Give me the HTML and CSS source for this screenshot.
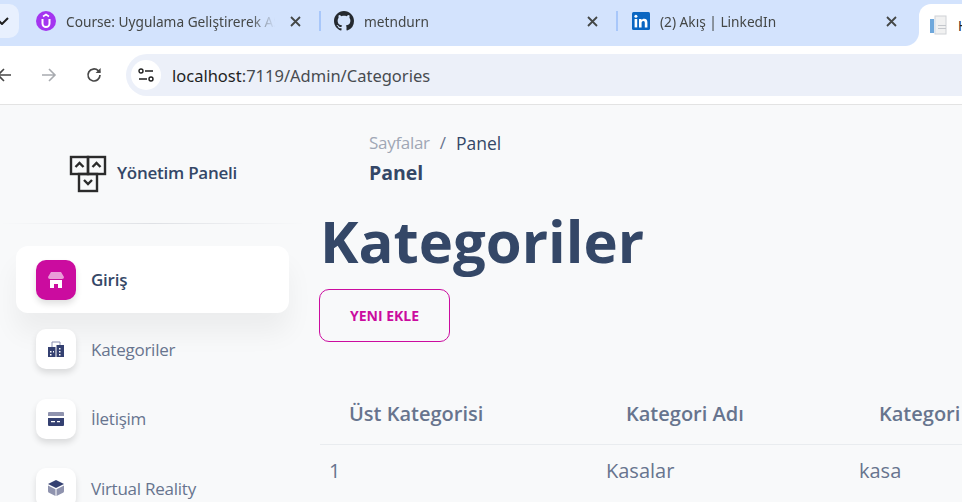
FILE: index.html
```html
<!DOCTYPE html>
<html lang="tr">
<head>
    <meta charset="UTF-8">
    <meta name="viewport" content="width=device-width, initial-scale=1.0">
    <title>Kategoriler</title>
    <link rel="stylesheet" href="styles.css">
</head>
<body>
    <header class="browser">
        <div class="tab-strip">
            <div class="tab-stub">
                <svg width="10" height="8" viewBox="0 0 10 8"><path d="M-1 4l3 3 6-6" fill="none" stroke="#1f1f1f" stroke-width="2"/></svg>
            </div>
            <div class="tab tab-course">
                <svg class="favicon" width="20" height="20" viewBox="0 0 20 20">
                    <circle cx="10" cy="10" r="10" fill="#a435f0"/>
                    <path d="M6.500 8v4.500a3.500 3.500 0 0 0 7 0V8" fill="none" stroke="#fff" stroke-width="2"/>
                    <path d="M7 5.500L10 3.500l3 2" fill="none" stroke="#fff" stroke-width="1.600"/>
                </svg>
                <span class="tab-title">Course: Uygulama Geliştirerek ASP.NET</span>
                <svg class="tab-close" width="11" height="11" viewBox="0 0 11 11"><path d="M1 1l9 9M10 1l-9 9" stroke="#444746" stroke-width="1.800"/></svg>
            </div>
            <div class="tab tab-github">
                <svg class="favicon" width="20" height="20" viewBox="0 0 16 16">
                    <path fill="#24292f" d="M8 0C3.58 0 0 3.58 0 8c0 3.54 2.29 6.53 5.47 7.59.4.07.55-.17.55-.38 0-.19-.01-.82-.01-1.49-2.01.37-2.53-.49-2.69-.94-.09-.23-.48-.94-.82-1.13-.28-.15-.68-.52-.01-.53.63-.01 1.08.58 1.23.82.72 1.21 1.87.87 2.33.66.07-.52.28-.87.51-1.07-1.78-.2-3.64-.89-3.64-3.95 0-.87.31-1.59.82-2.15-.08-.2-.36-1.02.08-2.12 0 0 .67-.21 2.2.82.64-.18 1.32-.27 2-.27s1.36.09 2 .27c1.53-1.04 2.2-.82 2.2-.82.44 1.1.16 1.92.08 2.12.51.56.82 1.27.82 2.15 0 3.07-1.87 3.75-3.65 3.95.29.25.54.73.54 1.48 0 1.07-.01 1.93-.01 2.2 0 .21.15.46.55.38A8.01 8.01 0 0 0 16 8c0-4.42-3.58-8-8-8z"/>
                </svg>
                <span class="tab-title">metndurn</span>
                <svg class="tab-close" width="11" height="11" viewBox="0 0 11 11"><path d="M1 1l9 9M10 1l-9 9" stroke="#444746" stroke-width="1.800"/></svg>
            </div>
            <div class="tab tab-linkedin">
                <svg class="favicon" width="18" height="18" viewBox="0 0 18 18">
                    <rect width="18" height="18" rx="1.500" fill="#0a66c2"/>
                    <rect x="2.600" y="7" width="2.600" height="8.400" fill="#fff"/>
                    <circle cx="3.900" cy="4.200" r="1.500" fill="#fff"/>
                    <path d="M7 7h2.500v1.200c.5-.8 1.400-1.400 2.700-1.400 2.400 0 3.200 1.500 3.200 3.800v4.800h-2.600v-4.300c0-1.100-.3-2-1.400-2s-1.800.8-1.800 2v4.300H7z" fill="#fff"/>
                </svg>
                <span class="tab-title">(2) Akış | LinkedIn</span>
                <svg class="tab-close" width="11" height="11" viewBox="0 0 11 11"><path d="M1 1l9 9M10 1l-9 9" stroke="#444746" stroke-width="1.800"/></svg>
            </div>
            <div class="tab-active">
                <svg class="favicon" width="18" height="20" viewBox="0 0 18 20">
                    <rect x="5" y="1" width="11" height="18" fill="#f1f1f1" stroke="#cfd2d6"/>
                    <rect x="0" y="4" width="4" height="14" fill="#6fa8dc"/>
                    <rect x="4" y="4" width="2" height="14" fill="#dfe6ee"/>
                    <rect x="8" y="10" width="8" height="1" fill="#c4c7cc"/>
                    <rect x="8" y="13" width="8" height="1" fill="#c4c7cc"/>
                </svg>
                <span class="tab-title-active">Home</span>
            </div>
        </div>
        <div class="toolbar">
            <svg class="nav-back" width="16" height="16" viewBox="0 0 16 16"><path d="M15 8H2M8 2L2 8l6 6" fill="none" stroke="#474747" stroke-width="1.600"/></svg>
            <svg class="nav-forward" width="16" height="16" viewBox="0 0 16 16"><path d="M1 8h13M8 2l6 6-6 6" fill="none" stroke="#a8abb0" stroke-width="1.600"/></svg>
            <svg class="nav-reload" width="18" height="18" viewBox="0 0 18 18"><path d="M15 9a6 6 0 1 1-1.800-4.300L15 6.500" fill="none" stroke="#474747" stroke-width="1.700"/><path d="M15.600 2v5h-5z" fill="#474747"/></svg>
            <div class="omnibox">
                <span class="site-info">
                    <svg width="16" height="14" viewBox="0 0 16 14">
                        <circle cx="3" cy="3" r="2" fill="none" stroke="#1f1f1f" stroke-width="1.400"/>
                        <path d="M7 3h8M1 11h8" stroke="#1f1f1f" stroke-width="1.400"/>
                        <circle cx="13" cy="11" r="2" fill="none" stroke="#1f1f1f" stroke-width="1.400"/>
                    </svg>
                </span>
                <span class="url"><span class="url-host">localhost</span>:7119/Admin/Categories</span>
            </div>
        </div>
    </header>

    <div class="layout">
        <aside class="sidebar">
            <div class="brand">
                <svg width="38" height="38" viewBox="0 0 38 38">
                    <g fill="none" stroke="#2b2b2b" stroke-width="2.400">
                        <rect x="2" y="2" width="17" height="17"/>
                        <rect x="19" y="2" width="17" height="17"/>
                        <rect x="10" y="19" width="18" height="17"/>
                        <path d="M6.500 12l4-4 4 4M23.500 12l4-4 4 4M15 25l4 4 4-4"/>
                    </g>
                </svg>
                <span class="brand-name">Yönetim Paneli</span>
            </div>
            <hr class="sidebar-line">
            <nav class="menu">
                <a class="menu-item active">
                    <span class="menu-icon">
                        <svg width="16" height="16" viewBox="0 0 16 16">
                            <path d="M3 0h10l3 5a2 2 0 0 1-2 2H2a2 2 0 0 1-2-2z" fill="#fff" opacity=".6"/>
                            <path d="M2 8h12v8H10v-4H6v4H2z" fill="#fff"/>
                        </svg>
                    </span>
                    Giriş
                </a>
                <a class="menu-item">
                    <span class="menu-icon">
                        <svg width="16" height="16" viewBox="0 0 16 16">
                            <path d="M4 6V1h8v5" fill="none" stroke="#8a8fb0" stroke-width="1"/>
                            <path d="M0 6h7.500v10H0zM8.500 4H16v12H8.500z" fill="#344071"/>
                            <path d="M2 10h1.500v1.500H2zM2 13h1.500v1.500H2zM5 10h1v1.500H5zM11 7h1.500v1.500H11zM11 10h1.500v1.500H11zM11 13h1.500v1.500H11z" fill="#fff"/>
                        </svg>
                    </span>
                    Kategoriler
                </a>
                <a class="menu-item">
                    <span class="menu-icon">
                        <svg width="16" height="14" viewBox="0 0 16 14">
                            <path d="M1 0h14a1 1 0 0 1 1 1v3H0V1a1 1 0 0 1 1-1z" fill="#8f93ae"/>
                            <path d="M0 6h16v7a1 1 0 0 1-1 1H1a1 1 0 0 1-1-1z" fill="#344071"/>
                            <path d="M3 9h4v1.300H3zM9 9h3v1.300H9z" fill="#fff"/>
                        </svg>
                    </span>
                    İletişim
                </a>
                <a class="menu-item">
                    <span class="menu-icon">
                        <svg width="16" height="16" viewBox="0 0 16 16">
                            <path d="M8 0l8 4-8 4-8-4z" fill="#344071"/>
                            <path d="M0 5.500l7.500 3.700V16L1 12.800a2 2 0 0 1-1-1.600zM16 5.500L8.500 9.200V16l6.500-3.200a2 2 0 0 0 1-1.600z" fill="#8f93ae"/>
                        </svg>
                    </span>
                    Virtual Reality
                </a>
            </nav>
        </aside>

        <main class="content">
            <div class="page-head">
                <div class="breadcrumb"><span class="crumb-muted">Sayfalar</span><span class="crumb-sep">/</span><span class="crumb-current">Panel</span></div>
                <div class="page-name">Panel</div>
            </div>
            <h1 class="title">Kategoriler</h1>
            <button class="add-button">YENI EKLE</button>
            <table class="category-table">
                <thead>
                    <tr>
                        <th>Üst Kategorisi</th>
                        <th>Kategori Adı</th>
                        <th>Kategori Açıklaması</th>
                    </tr>
                </thead>
                <tbody>
                    <tr>
                        <td>1</td>
                        <td>Kasalar</td>
                        <td>kasa</td>
                    </tr>
                </tbody>
            </table>
        </main>
    </div>
</body>
</html>
```
FILE: styles.css
```css
html, body {
    height: 100%;
}

body {
    margin: 0;
    overflow: hidden;
    background-color: #f8f9fa;
    font-family: 'Open Sans', sans-serif;
    color: #344767;
}

/* browser window */
.tab-strip {
    display: flex;
    height: 46px;
    background-color: #d3e3fd;
    font-family: 'Noto Sans', sans-serif;
    font-size: 13.700px;
    color: #444746;
}

.tab-stub {
    display: flex;
    align-items: center;
    width: 19px;
    height: 34px;
    margin-top: 4px;
    background-color: #e8f0fe;
    border-radius: 0 10px 10px 0;
    flex-shrink: 0;
}

.tab {
    display: flex;
    align-items: center;
    height: 42px;
    border-right: 2px solid transparent;
    flex-shrink: 0;
    position: relative;
}

.tab::after {
    content: "";
    position: absolute;
    right: -2px;
    top: 11px;
    width: 2px;
    height: 20px;
    background-color: #a8c7fa;
}

.tab-course {
    width: 283px;
    padding-left: 17px;
}

.tab-github {
    width: 282px;
    padding-left: 13px;
}

.tab-linkedin {
    width: 285px;
    padding-left: 14px;
}

.tab-linkedin::after {
    display: none;
}

.tab-linkedin .tab-close {
    margin-right: 20px;
}

.tab-title {
    flex: 1;
    min-width: 0;
    margin: 0 15px 0 10px;
    white-space: nowrap;
    overflow: hidden;
    -webkit-mask-image: linear-gradient(to right, #000 88%, transparent);
    mask-image: linear-gradient(to right, #000 88%, transparent);
}

.tab-close {
    margin-right: 18px;
    flex-shrink: 0;
}

.tab-active {
    position: relative;
    display: flex;
    align-items: center;
    flex: 1;
    min-width: 0;
    height: 42px;
    margin-top: 4px;
    padding-left: 11px;
    background-color: #fff;
    border-radius: 12px 0 0 0;
}

.tab-active::before {
    content: "";
    position: absolute;
    left: -14px;
    bottom: 0;
    width: 14px;
    height: 14px;
    background: radial-gradient(circle at 0 0, #d3e3fd 13.500px, #fff 14.500px);
}

.tab-active .favicon {
    flex-shrink: 0;
}

.tab-title-active {
    min-width: 0;
    margin-left: 10px;
    color: #1f1f1f;
    overflow: hidden;
    white-space: nowrap;
}

.toolbar {
    display: flex;
    align-items: center;
    height: 58px;
    background-color: #fff;
    border-bottom: 1px solid #e3e3e3;
}

.nav-back {
    margin-left: -4px;
}

.nav-forward {
    margin-left: 29px;
}

.nav-reload {
    margin-left: 28px;
}

.omnibox {
    display: flex;
    align-items: center;
    flex: 1;
    height: 42px;
    margin-left: 23px;
    padding-left: 5px;
    background-color: #ecf0f9;
    border-radius: 21px 0 0 21px;
}

.site-info {
    display: flex;
    align-items: center;
    justify-content: center;
    width: 30px;
    height: 30px;
    background-color: #fff;
    border-radius: 50%;
}

.url {
    margin-left: 11px;
    font-family: 'Noto Sans', sans-serif;
    font-size: 16.500px;
    color: #474b50;
}

.url-host {
    color: #1f1f1f;
}

/* page */
.layout {
    display: flex;
}

.sidebar {
    width: 305px;
    flex-shrink: 0;
}

.brand {
    display: flex;
    align-items: center;
    gap: 10px;
    height: 118px;
    padding: 20px 0 0 69px;
    box-sizing: border-box;
}

.brand-name {
    margin-top: -3px;
    font-size: 17px;
    font-weight: 600;
    letter-spacing: -0.250px;
}

.sidebar-line {
    height: 1px;
    margin: 0 0 22px;
    border: 0;
    background: linear-gradient(to right, transparent, #dfe1e5, transparent);
}

.menu {
    display: flex;
    flex-direction: column;
    gap: 2.500px;
    padding-left: 16px;
    width: 273px;
}

.menu-item {
    display: flex;
    align-items: center;
    gap: 15px;
    height: 67px;
    padding-left: 20px;
    border-radius: 12px;
    font-size: 17px;
    letter-spacing: -0.250px;
    color: #67748e;
    flex-shrink: 0;
}

.menu-item.active {
    background-color: #fff;
    color: #344767;
    font-weight: 600;
    box-shadow: 0 20px 27px rgba(0, 0, 0, 0.05);
}

.menu-icon {
    display: flex;
    align-items: center;
    justify-content: center;
    width: 40px;
    height: 40px;
    background-color: #fff;
    border-radius: 10px;
    box-shadow: 0 4px 6px rgba(0, 0, 0, 0.12);
}

.active .menu-icon {
    background-color: #cb0c9f;
}

.content {
    flex: 1;
    min-width: 0;
    padding-left: 15px;
}

.page-head {
    padding: 26px 0 0 49px;
}

.breadcrumb {
    display: flex;
    font-size: 17px;
    line-height: 24px;
}

.crumb-muted {
    color: #a0a7b5;
    letter-spacing: -0.300px;
}

.crumb-sep {
    margin: 0 10px;
    color: #67748e;
}

.crumb-current {
    font-size: 17.500px;
}

.page-name {
    margin-top: 5px;
    font-size: 19.500px;
    line-height: 25px;
    font-weight: 700;
}

.title {
    margin: 17px 0 0;
    font-size: 58px;
    line-height: 77px;
    font-weight: 700;
}

.add-button {
    display: block;
    width: 131px;
    height: 53px;
    margin-top: 10px;
    margin-left: -1px;
    padding: 0;
    background: transparent;
    border: 1px solid #cb0c9f;
    border-radius: 10px;
    font-family: 'Open Sans', sans-serif;
    font-size: 14px;
    font-weight: 700;
    color: #cb0c9f;
}

.category-table {
    width: 100%;
    margin-top: 44px;
    border-collapse: collapse;
    table-layout: fixed;
    color: #67748e;
}

.category-table th {
    height: 58px;
    padding: 0 0 2px 29px;
    box-sizing: border-box;
    border-bottom: 1px solid #e9ecef;
    font-size: 20px;
    font-weight: 600;
    text-align: left;
    white-space: nowrap;
    overflow: hidden;
}

.category-table th:nth-child(1) {
    width: 277px;
}

.category-table th:nth-child(2) {
    width: 253px;
}

.category-table td {
    height: 54px;
    padding: 0 0 2px 9px;
    box-sizing: border-box;
    font-size: 20px;
}
```
